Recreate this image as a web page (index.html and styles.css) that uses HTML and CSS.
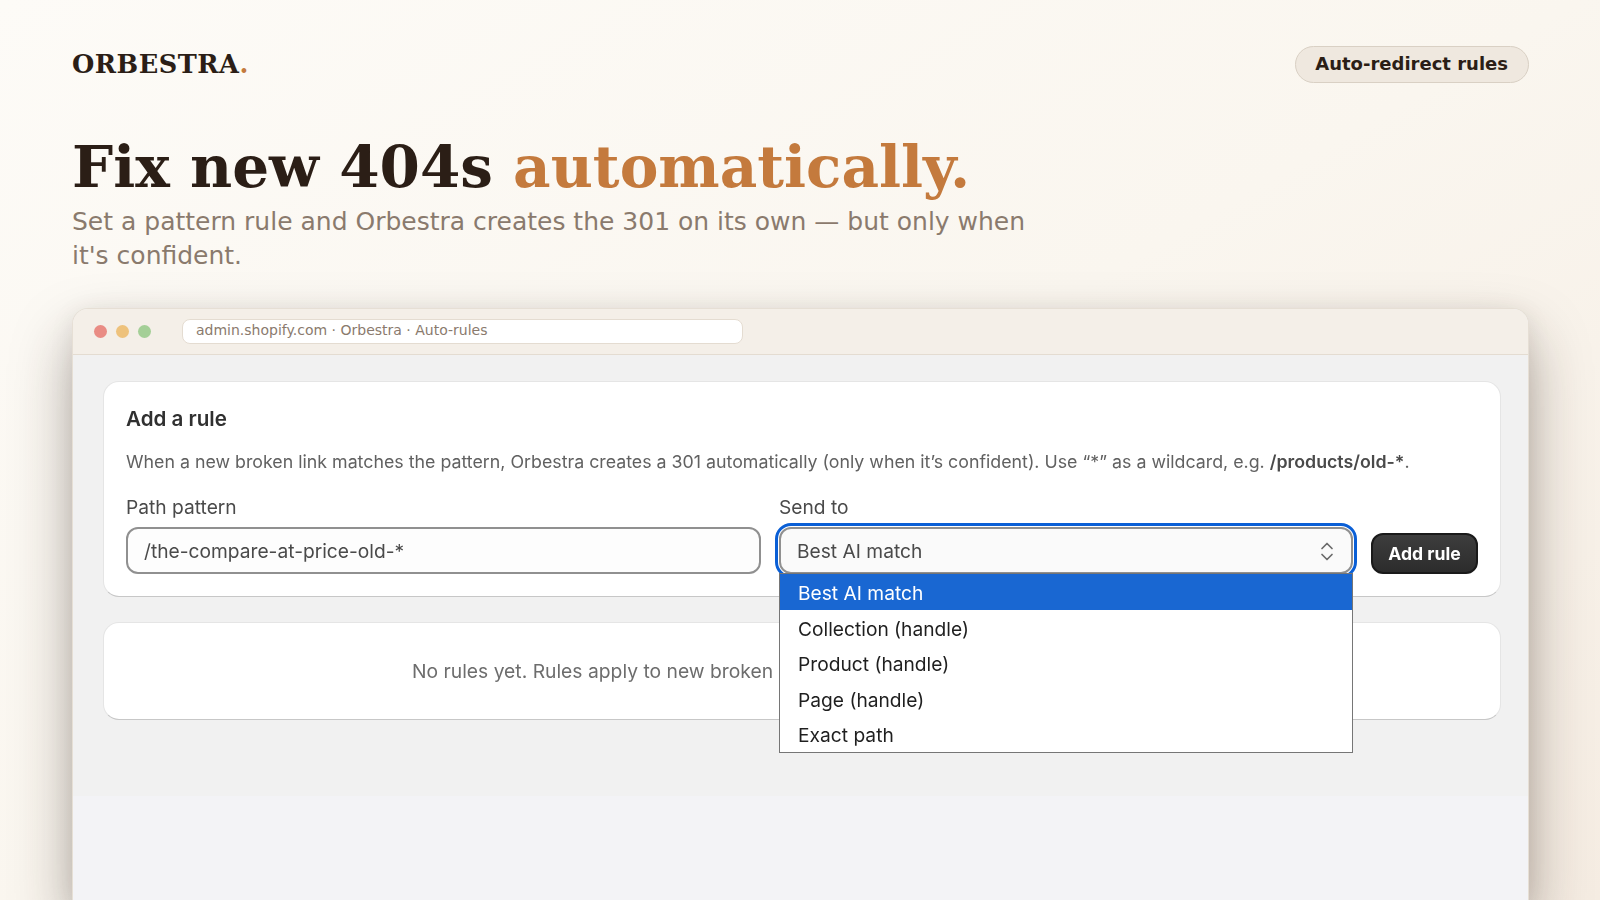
FILE: index.html
```html
<!DOCTYPE html>
<html lang="en">
<head>
<meta charset="utf-8">
<title>Orbestra</title>
<link rel="stylesheet" href="styles.css">
</head>
<body>
<div class="page">
  <header class="top">
    <div class="logo">ORBESTRA<span class="dot">.</span></div>
    <div class="pill">Auto-redirect rules</div>
  </header>
  <h1 class="title">Fix new 404s <span class="accent">automatically.</span></h1>
  <p class="sub">Set a pattern rule and Orbestra creates the 301 on its own — but only when it's confident.</p>
  <section class="window">
    <div class="chrome">
      <div class="lights"><span class="light red"></span><span class="light yellow"></span><span class="light green"></span></div>
      <div class="url">admin.shopify.com · Orbestra · Auto-rules</div>
    </div>
    <div class="app">
      <div class="content">
        <div class="card form-card">
          <h2 class="card-title">Add a rule</h2>
          <p class="help">When a new broken link matches the pattern, Orbestra creates a 301 automatically (only when it’s confident). Use “*” as a wildcard, e.g. <strong>/products/old-*</strong>.</p>
          <div class="row">
            <div class="field">
              <div class="label">Path pattern</div>
              <div class="input">/the-compare-at-price-old-*</div>
            </div>
            <div class="field select-field">
              <div class="label">Send to</div>
              <div class="input select">
                <span>Best AI match</span>
                <svg class="updown" width="16" height="22" viewBox="0 0 16 22" fill="none" stroke="#6b6b6b" stroke-width="1.7" stroke-linecap="round" stroke-linejoin="round"><path d="M3 8.500 8 3.500 13 8.500"/><path d="M3 14.500 8 19.500 13 14.500"/></svg>
              </div>
              <ul class="menu">
                <li class="opt on">Best AI match</li>
                <li class="opt">Collection (handle)</li>
                <li class="opt">Product (handle)</li>
                <li class="opt">Page (handle)</li>
                <li class="opt">Exact path</li>
              </ul>
            </div>
            <button class="btn">Add rule</button>
          </div>
        </div>
        <div class="card empty">No rules yet. Rules apply to new broken links going forward, not to 404s in your report.</div>
      </div>
    </div>
  </section>
</div>
</body>
</html>
```
FILE: styles.css
```css
* { box-sizing: border-box; }
html, body { margin: 0; height: 100%; }
body {
  overflow: hidden;
  background: linear-gradient(150deg, #fdfbf7 0%, #faf6ef 50%, #f5ece2 100%);
  font-family: "DejaVu Sans", sans-serif;
  color: #2b1e16;
}
.page { height: 900px; padding: 46px 71px 0 72px; display: flex; flex-direction: column; }
.top { display: flex; justify-content: space-between; align-items: center; height: 36px; }
.logo { font-family: "DejaVu Serif", serif; font-weight: 700; font-size: 25.6px; letter-spacing: 0.5px; color: #2b1e16; }
.dot { color: #c47a3d; }
.pill {
  align-self: flex-start; height: 37px; padding: 0 20px 2px 19.5px; display: flex; align-items: center;
  background: #efe8df; border: 1px solid #d9d0c4; border-radius: 19px;
  font-weight: 700; font-size: 18px; color: #2b1e16;
}
.title { margin: 49px 0 0; font-family: "DejaVu Serif", serif; font-weight: 700; font-size: 58px; line-height: 72px; color: #2b1e16; }
.accent { color: #c47a3d; }
.sub { margin: 2px 0 0; width: 980px; font-size: 25px; line-height: 33.75px; color: #8a7a6d; }
.window {
  margin-top: 35.5px; flex: 1; min-height: 0;
  border: 1px solid #e6dfd5; border-bottom: 0;
  border-radius: 16px 16px 0 0; overflow: hidden; background: #f3f3f6;
  box-shadow: 0 30px 60px rgba(43, 30, 22, 0.36), 0 4px 24px rgba(43, 30, 22, 0.08);
  display: flex; flex-direction: column;
}
.chrome { height: 46px; flex: none; display: flex; align-items: center; background: #f4efe8; border-bottom: 1px solid #e4dcd1; padding: 0 21px; }
.lights { display: flex; gap: 9px; margin-right: 31px; }
.light { width: 13px; height: 13px; border-radius: 50%; }
.red { background: #e98c84; }
.yellow { background: #eec27c; }
.green { background: #a4cf97; }
.url {
  width: 561px; height: 25px; padding: 0 13px 3px; display: flex; align-items: center;
  background: #fff; border: 1px solid #e4dcd1; border-radius: 8px;
  font-size: 14px; color: #8a7a6d;
}
.app { flex: 1; }
.content { height: 441px; padding: 26px 27px 0 30px; background: #f1f1f1; font-family: Inter, sans-serif; display: flex; flex-direction: column; gap: 25px; filter: blur(0.3px); }
.card { background: #fff; border-radius: 16px; border: 1px solid rgba(0,0,0,.1); border-bottom-color: rgba(0,0,0,.22); }
.form-card { height: 216px; padding: 23px 22px 0; }
.card-title { margin: 0; font-size: 20.6px; line-height: 28px; font-weight: 600; color: #303030; }
.help { margin: 16px 0 0; font-size: 17.8px; line-height: 26px; color: #616161; white-space: nowrap; }
.help strong { font-weight: 600; color: #4a4a4a; }
.row { display: flex; align-items: flex-end; gap: 18px; margin-top: 19px; }
.field { width: 635px; position: relative; }
.select-field { width: 574px; }
.label { font-size: 19.2px; line-height: 26px; color: #4a4a4a; margin-bottom: 7px; }
.input {
  height: 47px; padding: 0 16px; display: flex; align-items: center; justify-content: space-between;
  background: #fdfdfd; border: 2px solid #909090; border-radius: 12px; font-size: 19.2px; color: #4a4a4a;
}
.select { background: #fafafa; outline: 3px solid #0a5fd6; outline-offset: 1px; }
.menu {
  position: absolute; left: 0; top: 79px; width: 574px; margin: 0; padding: 0; list-style: none;
  background: #fff; border: 1px solid #767676; font-size: 19.2px; color: #1f1f1f; z-index: 2;
}
.opt { height: 35.5px; padding: 3px 18px 0; display: flex; align-items: center; }
.opt.on { background: #1967d2; color: #fff; }
.btn {
  width: 107px; height: 41px; border: 2px solid #1a1a1a; border-radius: 12px;
  background: linear-gradient(#3d3d3d, #2c2c2c); color: #fff; font: 700 17.6px Inter, sans-serif;
}
.empty { height: 98px; padding-left: 11px; display: flex; align-items: center; justify-content: center; font-size: 19.3px; color: #6d6d6d; white-space: nowrap; }
```
